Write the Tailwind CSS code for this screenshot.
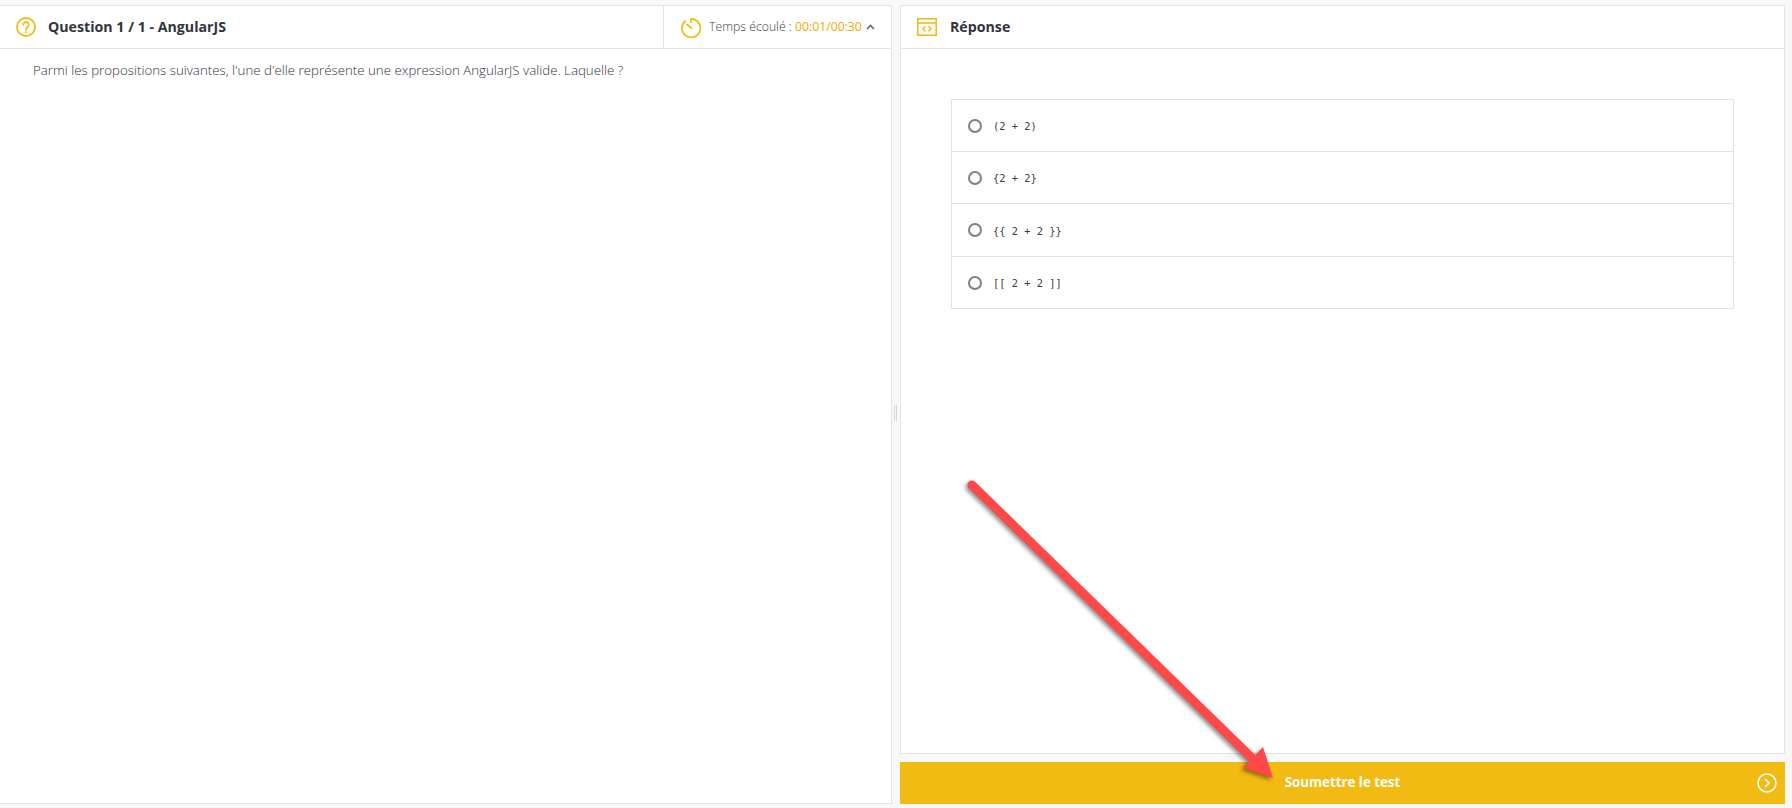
<!DOCTYPE html>
<html lang="fr">
<head>
<meta charset="utf-8">
<title>Question</title>
<script src="https://cdn.jsdelivr.net/npm/@tailwindcss/browser@4"></script>
</head>
<body class="m-0 bg-[#f8f8f8] font-['Open_Sans',sans-serif]">
<div class="relative w-[1792px] h-[808px] overflow-hidden flex pt-[5px] pb-[4px] pr-[7px]">
  <section class="w-[892px] shrink-0 bg-white border border-l-0 border-[#e3e3e3] flex flex-col">
    <header class="h-[43px] shrink-0 border-b border-[#e3e3e3] flex items-stretch">
      <div class="flex-1 flex items-center pl-[16px]">
        <svg width="20" height="20" viewBox="0 0 20 20" fill="none" stroke="#f2bb13" stroke-width="1.8" stroke-linecap="round"><circle cx="10" cy="10" r="9"/><path d="M7.3 7.8a2.7 2.7 0 1 1 4.2 2.2c-1 .7-1.5 1.2-1.5 2.4"/><path d="M10 15v.2"/></svg>
        <h1 class="ml-[12px] text-[14.2px] font-bold text-[#33333d] leading-none">Question 1 / 1 - AngularJS</h1>
      </div>
      <div class="w-[228px] shrink-0 border-l border-[#e3e3e3] flex items-center pl-[17px]">
        <svg width="20" height="21" viewBox="0 0 20 21" fill="none" stroke="#f2bb13" stroke-width="1.8" stroke-linecap="round"><path d="M4.2 4.2A9.2 9.2 0 1 0 10 2v3"/><path d="M5.8 7.2 10.5 11"/></svg>
        <span class="ml-[8px] text-[12.25px] font-light text-[#3c3c46] whitespace-nowrap">Temps écoulé : <span class="text-[#f2a900] font-normal">00:01/00:30</span></span>
        <svg class="ml-[4px]" width="9" height="6" viewBox="0 0 9 6" fill="none" stroke="#666" stroke-width="1.6"><path d="M1 5 4.5 1.5 8 5"/></svg>
      </div>
    </header>
    <div class="pl-[33px] pt-[12px] text-[13.3px] font-light leading-[18px] text-[#33333d]">Parmi les propositions suivantes, l'une d'elle représente une expression AngularJS valide. Laquelle ?</div>
  </section>

  <div class="w-[8px] shrink-0 flex items-center justify-center gap-[1px] pt-[17px] pr-[1px]">
    <span class="w-[1px] h-[16px] bg-[#d8d8d8]"></span><span class="w-[1px] h-[16px] bg-[#d8d8d8]"></span>
  </div>

  <main class="flex-1 flex flex-col gap-[8px]">
    <section class="flex-1 bg-white border border-[#e3e3e3] flex flex-col">
      <header class="h-[43px] shrink-0 border-b border-[#e3e3e3] flex items-center pl-[16px]">
        <svg width="20" height="18" viewBox="0 0 20 18" fill="none" stroke="#f2bb13" stroke-width="1.6"><rect x="0.8" y="0.8" width="18.4" height="16.4"/><path d="M1 5h18"/><path d="M8.5 8 5.8 10.8l2.7 2.7M11.5 8l2.7 2.8-2.7 2.7" stroke-width="1.4"/></svg>
        <h2 class="ml-[13px] text-[14.2px] font-bold text-[#33333d] leading-none">Réponse</h2>
      </header>
      <div class="pl-[50px] pr-[50px] pt-[50px]">
        <ul class="border border-[#e3e3e3] font-['DejaVu_Sans_Mono','Liberation_Mono',monospace] text-[10.4px] text-[#3c3c46]">
          <li class="h-[52px] flex items-center pl-[16px] border-b border-[#e3e3e3]"><span class="w-[14px] h-[14px] rounded-full border-2 border-[#808080]"></span><span class="ml-[11px] pt-[3px] whitespace-pre">(2 + 2)</span></li>
          <li class="h-[52px] flex items-center pl-[16px] border-b border-[#e3e3e3]"><span class="w-[14px] h-[14px] rounded-full border-2 border-[#808080]"></span><span class="ml-[11px] pt-[3px] whitespace-pre">{2 + 2}</span></li>
          <li class="h-[53px] flex items-center pl-[16px] border-b border-[#e3e3e3]"><span class="w-[14px] h-[14px] rounded-full border-2 border-[#808080]"></span><span class="ml-[11px] pt-[3px] whitespace-pre">{{ 2 + 2 }}</span></li>
          <li class="h-[51px] flex items-center pl-[16px]"><span class="w-[14px] h-[14px] rounded-full border-2 border-[#808080]"></span><span class="ml-[11px] pt-[3px] whitespace-pre">[[ 2 + 2 ]]</span></li>
        </ul>
      </div>
    </section>
    <button class="relative h-[42px] shrink-0 bg-[#f2bb13] text-white text-[13.3px] font-bold flex items-center justify-center">
      <span>Soumettre le test</span>
      <svg class="absolute right-[8px] top-[11px]" width="20" height="20" viewBox="0 0 20 20" fill="none" stroke="#fff" stroke-width="1.5"><circle cx="10" cy="10" r="9"/><path d="M8 6l4 4-4 4" stroke-width="1.7"/></svg>
    </button>
  </main>

  <svg class="absolute left-0 top-0 pointer-events-none drop-shadow-[-2px_2px_2px_rgba(0,0,0,0.45)]" width="1792" height="808" viewBox="0 0 1792 808" fill="none">
    <path d="M972 485 1256 762" stroke="#ff4848" stroke-width="9" stroke-linecap="round"/>
    <path d="M1263 747 1273 778 1243 768Z" fill="#ff4848"/>
  </svg>
</div>
</body>
</html>
